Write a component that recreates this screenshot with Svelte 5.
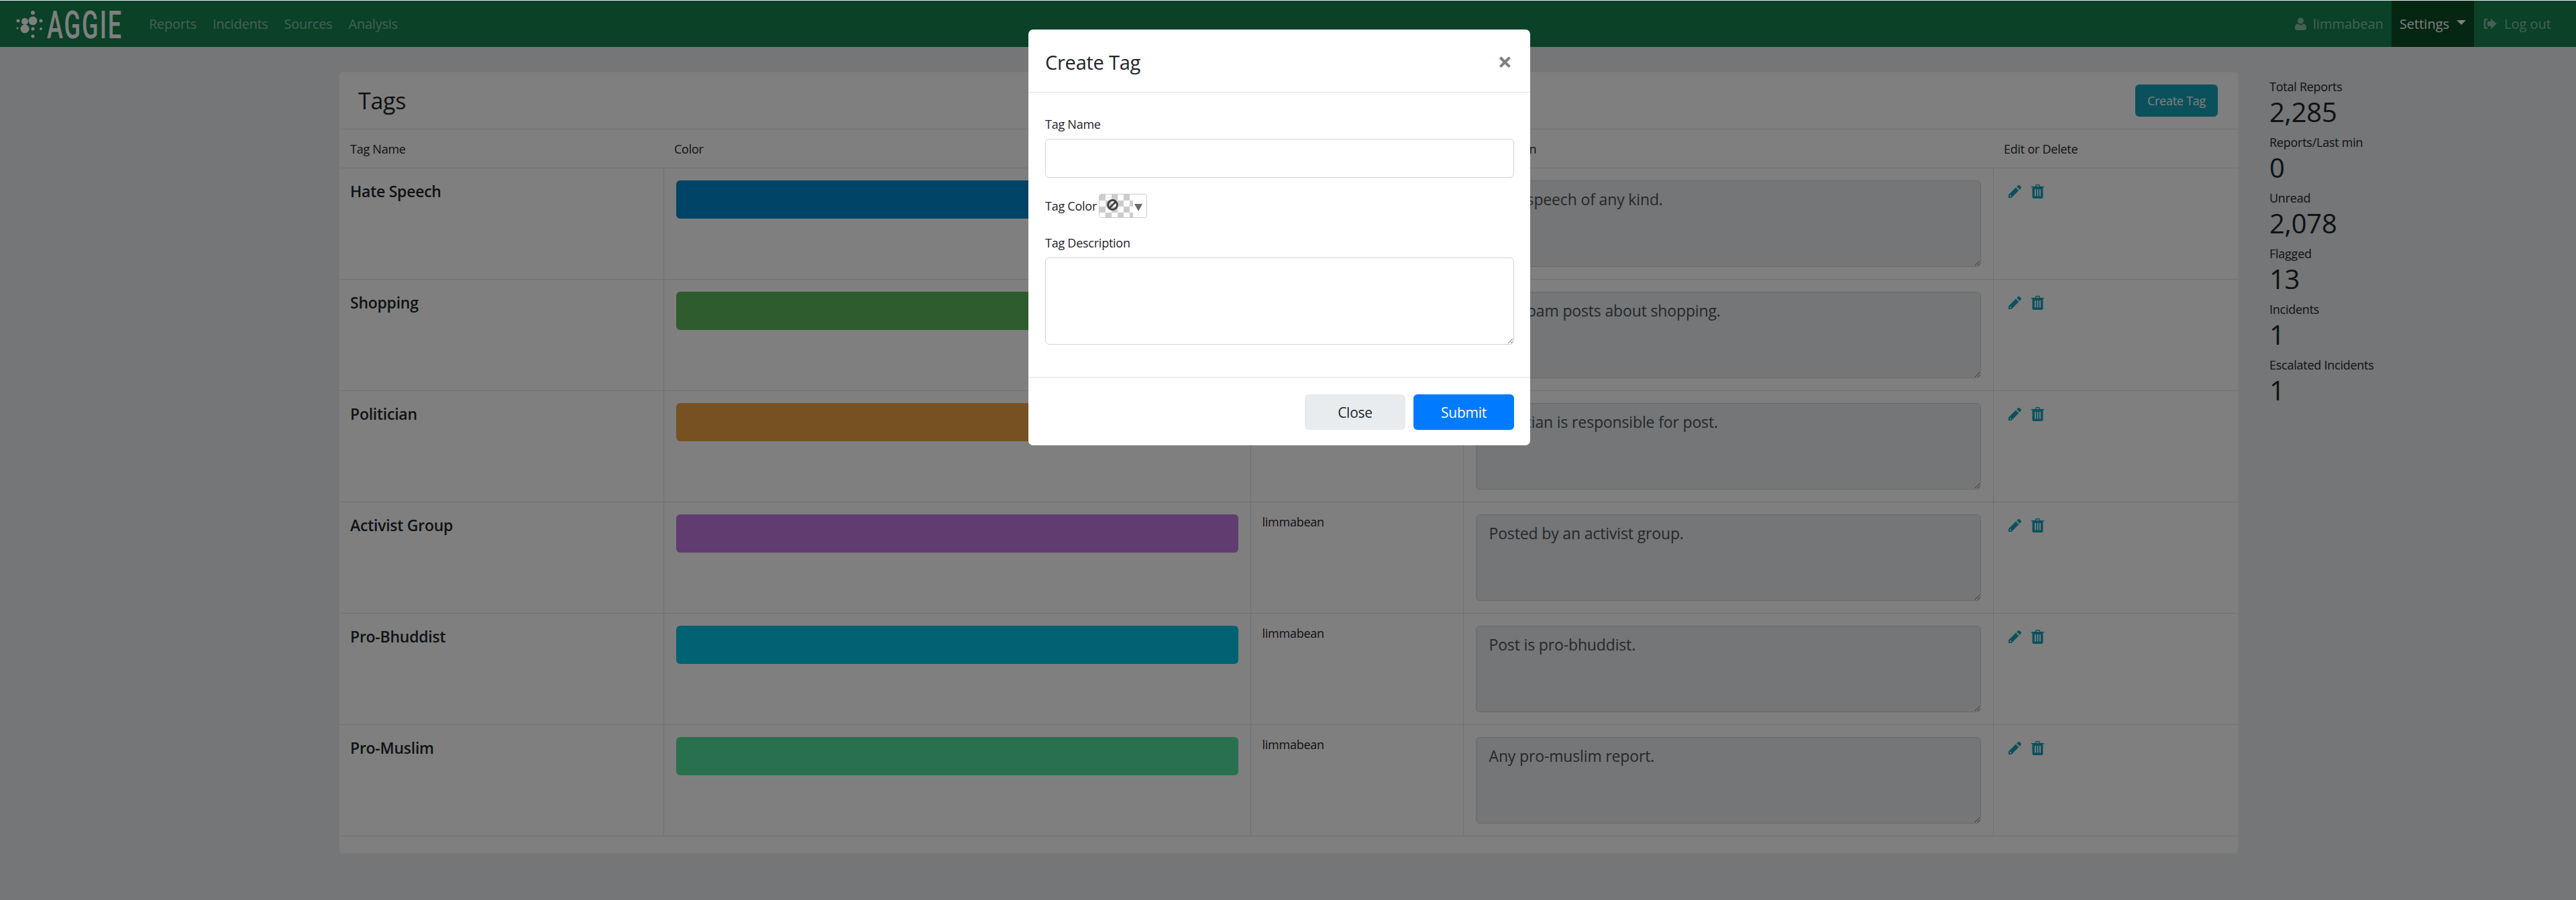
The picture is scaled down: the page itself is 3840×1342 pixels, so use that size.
<script>
    const tags = [
        { name: 'Hate Speech', color: '#0088d0', user: 'limmabean', desc: 'Hate speech of any kind.' },
        { name: 'Shopping', color: '#5cb85c', user: 'limmabean', desc: 'Any spam posts about shopping.' },
        { name: 'Politician', color: '#f0a345', user: 'limmabean', desc: 'Politician is responsible for post.' },
        { name: 'Activist Group', color: '#c278e2', user: 'limmabean', desc: 'Posted by an activist group.' },
        { name: 'Pro-Bhuddist', color: '#00c4e6', user: 'limmabean', desc: 'Post is pro-bhuddist.' },
        { name: 'Pro-Muslim', color: '#52e09c', user: 'limmabean', desc: 'Any pro-muslim report.' }
    ];

    const stats = [
        { label: 'Total Reports', value: '2,285' },
        { label: 'Reports/Last min', value: '0' },
        { label: 'Unread', value: '2,078' },
        { label: 'Flagged', value: '13' },
        { label: 'Incidents', value: '1' },
        { label: 'Escalated Incidents', value: '1' }
    ];

    const navLinks = ['Reports', 'Incidents', 'Sources', 'Analysis'];
</script>

<div class="page">
    <nav class="navbar">
        <div class="brand">
            <svg class="logo" width="160" height="69" viewBox="0 0 160 69">
                <g fill="#fff" transform="translate(0 15)">
                    <circle cx="25" cy="3" r="3" />
                    <circle cx="3" cy="15" r="2.5" />
                    <circle cx="13" cy="16" r="5" />
                    <circle cx="25" cy="15" r="6.5" />
                    <circle cx="37" cy="15" r="2.5" />
                    <circle cx="2" cy="26" r="1.5" />
                    <circle cx="13" cy="27" r="6.5" />
                    <circle cx="25" cy="27" r="2.5" />
                    <circle cx="37" cy="27" r="2" />
                    <circle cx="25" cy="38" r="2.5" />
                </g>
                <text class="logo-text" transform="translate(46 56) scale(1 1.6)">AGGIE</text>
            </svg>
        </div>
        <ul class="nav-left">
            {#each navLinks as link}
                <li>{link}</li>
            {/each}
        </ul>
        <div class="nav-right">
            <span class="user">
                <svg width="17" height="19" viewBox="0 0 17 19" fill="currentColor"><circle cx="8.5" cy="5" r="4.6" /><path d="M0 16c0-4 1.500-6.500 4-6.500 1.200.9 2.800 1.500 4.500 1.500s3.300-.6 4.500-1.500c2.500 0 4 2.500 4 6.500 0 1.800-1.200 3-3 3H3c-1.800 0-3-1.200-3-3z" /></svg>
                limmabean
            </span>
            <span class="settings">Settings <i class="caret"></i></span>
            <span class="logout">
                <svg width="20" height="17" viewBox="0 0 20 17" fill="currentColor"><path d="M6 2H4C2.900 2 2 2.900 2 4v9c0 1.100.9 2 2 2h2" fill="none" stroke="currentColor" stroke-width="2.500" /><path d="M11 0.500l9 8-9 8v-4.500H6V5h5z" /></svg>
                Log out
            </span>
        </div>
    </nav>

    <div class="content">
        <main class="card">
            <div class="card-head">
                <h2>Tags</h2>
                <button class="btn-create">Create Tag</button>
            </div>
            <table>
                <colgroup>
                    <col style="width: 483px" />
                    <col style="width: 875px" />
                    <col style="width: 317px" />
                    <col style="width: 790px" />
                    <col />
                </colgroup>
                <thead>
                    <tr>
                        <th>Tag Name</th>
                        <th>Color</th>
                        <th>Creator</th>
                        <th>Description</th>
                        <th>Edit or Delete</th>
                    </tr>
                </thead>
                <tbody>
                    {#each tags as tag}
                        <tr>
                            <td class="tag-name">{tag.name}</td>
                            <td><div class="swatch" style="background: {tag.color}"></div></td>
                            <td class="creator">{tag.user}</td>
                            <td><textarea class="desc" readonly value={tag.desc}></textarea></td>
                            <td class="actions">
                                <svg width="21" height="21" viewBox="0 0 21 21" fill="currentColor"><path d="M15 1.500c.8-.8 2-.8 2.800 0l1.700 1.700c.8.800.8 2 0 2.800l-1.800 1.800-4.500-4.500zM11.900 4.600l4.500 4.500L5.500 20H1v-4.500zM3 16.200v2.100h2.100l.4-.5-2-2z" /></svg>
                                <svg width="19" height="21" viewBox="0 0 19 21" fill="currentColor"><path fill-rule="evenodd" d="M0 3h5.500l1-2.500c.1-.3.400-.5.700-.5h4.600c.3 0 .6.200.7.500l1 2.500H19v1.500h-1.500V19c0 1.100-.9 2-2 2h-12c-1.100 0-2-.9-2-2V4.500H0zM7 3h5l-.6-1.400H7.600zM5 7v10.500h1.800V7zM8.600 7v10.500h1.800V7zM12.200 7v10.500H14V7z" /></svg>
                            </td>
                        </tr>
                    {/each}
                </tbody>
            </table>
        </main>

        <aside class="stats">
            {#each stats as stat}
                <div class="stat">
                    <div class="stat-label">{stat.label}</div>
                    <div class="stat-value">{stat.value}</div>
                </div>
            {/each}
        </aside>
    </div>

    <div class="backdrop"></div>

    <div class="modal">
        <div class="modal-header">
            <h4>Create Tag</h4>
            <span class="close">×</span>
        </div>
        <div class="modal-body">
            <label for="tag-name">Tag Name</label>
            <input id="tag-name" type="text" />
            <div class="color-row">
                <span class="color-label">Tag Color</span>
                <span class="picker">
                    <span class="checker">
                        <svg width="19" height="19" viewBox="0 0 22 22" fill="none" stroke="#444" stroke-width="3.500"><circle cx="11" cy="11" r="8" /><path d="M5.500 16.500L16.500 5.500" /></svg>
                    </span>
                    <i class="arrow"></i>
                </span>
            </div>
            <label for="tag-desc">Tag Description</label>
            <textarea id="tag-desc"></textarea>
        </div>
        <div class="modal-footer">
            <button class="btn-close">Close</button>
            <button class="btn-submit">Submit</button>
        </div>
    </div>
</div>

<style>
    :global(body) {
        margin: 0;
        background: #e9ecef;
    }

    .page {
        position: relative;
        height: 1342px;
        overflow: hidden;
        padding-top: 1px;
        box-sizing: border-box;
        font-family: "Open Sans", "Noto Sans", sans-serif;
        font-size: 18px;
        letter-spacing: -0.25px;
        color: #212529;
    }

    .navbar {
        display: flex;
        align-items: center;
        height: 69px;
        background: #15834f;
        color: rgba(255, 255, 255, 0.5);
        font-size: 20px;
    }

    .brand {
        display: flex;
        align-items: center;
        padding-left: 24px;
        width: 198px;
    }

    .logo-text {
        font-family: "Roboto", sans-serif;
        font-size: 36px;
        font-weight: 500;
        letter-spacing: 2px;
        fill: #fff;
    }

    .nav-left {
        display: flex;
        gap: 24px;
        margin: 0;
        padding: 0;
        list-style: none;
    }

    .nav-right {
        display: flex;
        align-items: stretch;
        align-self: stretch;
        margin-left: auto;
        padding-right: 37px;
        letter-spacing: 0;
    }

    .nav-right > span {
        display: flex;
        align-items: center;
    }

    .user {
        gap: 10px;
        padding-right: 12px;
    }

    .settings {
        gap: 11px;
        padding: 0 12px;
        background: #0a4c22;
        color: #fff;
    }

    .caret {
        width: 0;
        height: 0;
        margin-top: -4px;
        border-left: 7px solid transparent;
        border-right: 7px solid transparent;
        border-top: 7px solid #fff;
    }

    .logout {
        gap: 11px;
        padding-left: 14px;
    }

    .content {
        display: flex;
        align-items: flex-start;
        padding: 37px 0 0 505px;
    }

    .card {
        width: 2832px;
        background: #fff;
        border: 1px solid rgba(0, 0, 0, 0.05);
        border-radius: 6px;
        padding-bottom: 25px;
        box-sizing: border-box;
    }

    .card-head {
        display: flex;
        align-items: center;
        justify-content: space-between;
        height: 84px;
        padding: 0 30px 0 28px;
    }

    .card-head h2 {
        margin: 0;
        font-size: 34px;
        font-weight: 500;
    }

    .btn-create {
        width: 123px;
        height: 48px;
        padding: 0;
        border: none;
        border-radius: 6px;
        background: #17a2b8;
        color: #fff;
        font: inherit;
        letter-spacing: inherit;
    }

    table {
        width: 100%;
        border-collapse: collapse;
        table-layout: fixed;
    }

    th {
        height: 58px;
        padding: 0 18px 0 16px;
        box-sizing: border-box;
        border-top: 1px solid #dee2e6;
        border-bottom: 1px solid #dee2e6;
        font-weight: 400;
        text-align: left;
    }

    td {
        height: 166px;
        padding: 18px;
        box-sizing: border-box;
        border: 1px solid #dee2e6;
        vertical-align: top;
    }

    td:first-child {
        border-left: none;
    }

    td:last-child {
        border-right: none;
    }

    .tag-name {
        padding: 18px 16px;
        font-size: 23px;
        font-weight: 600;
    }

    .swatch {
        height: 57px;
        border-radius: 6px;
    }

    .creator {
        padding: 17px 18px 18px 17px;
    }

    .desc {
        display: block;
        width: 100%;
        height: 129px;
        padding: 11px 19px;
        box-sizing: border-box;
        border: 1px solid #ced4da;
        border-radius: 6px;
        background: #e9ecef;
        color: #495057;
        font: inherit;
        font-size: 23px;
        letter-spacing: -0.15px;
    }

    .actions {
        color: #17a2b8;
        padding: 24px 18px 18px 21px;
    }

    .actions svg {
        margin-right: 10px;
    }

    .stats {
        padding: 0 0 0 46px;
    }

    .stat {
        height: 83px;
    }

    .stat-label {
        padding-top: 8px;
        line-height: 28px;
    }

    .stat-value {
        font-size: 40px;
        line-height: 47px;
    }

    .backdrop {
        position: absolute;
        top: 1px;
        left: 0;
        right: 0;
        bottom: 0;
        background: rgba(0, 0, 0, 0.5);
    }

    .modal {
        position: absolute;
        top: 44px;
        left: 1533px;
        width: 748px;
        height: 620px;
        display: flex;
        flex-direction: column;
        box-sizing: border-box;
        background: #fff;
        border-radius: 7px;
    }

    .modal-header {
        display: flex;
        align-items: center;
        justify-content: space-between;
        height: 94px;
        padding: 3px 27px 0 25px;
        box-sizing: border-box;
        border-bottom: 1px solid #dee2e6;
    }

    .modal-header h4 {
        margin: 0;
        font-size: 29px;
        font-weight: 500;
    }

    .close {
        margin-top: -3px;
        color: #808080;
        font-size: 38px;
        font-weight: 700;
        line-height: 1;
    }

    .modal-body {
        flex: 1;
        display: flex;
        flex-direction: column;
        padding: 35px 24px 0 25px;
    }

    .modal-body label,
    .color-label {
        line-height: 25px;
    }

    #tag-name {
        height: 58px;
        margin: 9px 0 0;
        box-sizing: border-box;
        border: 1px solid #ced4da;
        border-radius: 6px;
    }

    .color-row {
        display: flex;
        align-items: center;
        gap: 3px;
        margin: 24px 0 25px;
    }

    .picker {
        display: flex;
        align-items: center;
        width: 72px;
        height: 36px;
        box-sizing: border-box;
        border: 1px solid #ccc;
        border-radius: 4px;
        overflow: hidden;
    }

    .checker {
        display: flex;
        align-items: center;
        width: 50px;
        height: 34px;
        padding: 0 0 4px 10px;
        box-sizing: border-box;
        background-color: #fff;
        background-image: conic-gradient(#ccc 25%, #fff 0 50%, #ccc 0 75%, #fff 0);
        background-position: 9px 0;
        background-size: 18px 18px;
    }

    .arrow {
        width: 0;
        height: 0;
        margin: 4px 0 0 2px;
        border-left: 6px solid transparent;
        border-right: 6px solid transparent;
        border-top: 11px solid #6b6b6b;
    }

    #tag-desc {
        height: 130px;
        margin: 9px 0 0;
        box-sizing: border-box;
        border: 1px solid #ced4da;
        border-radius: 6px;
    }

    .modal-footer {
        display: flex;
        justify-content: flex-end;
        gap: 12px;
        height: 102px;
        padding: 25px 24px 0 0;
        box-sizing: border-box;
        border-top: 1px solid #dee2e6;
    }

    .modal-footer button {
        width: 150px;
        height: 53px;
        border: none;
        border-radius: 6px;
        font: inherit;
        font-size: 21px;
        letter-spacing: inherit;
    }

    .btn-close {
        background: #e9ecef;
        color: #212529;
    }

    .btn-submit {
        background: #007bff;
        color: #fff;
    }
</style>
